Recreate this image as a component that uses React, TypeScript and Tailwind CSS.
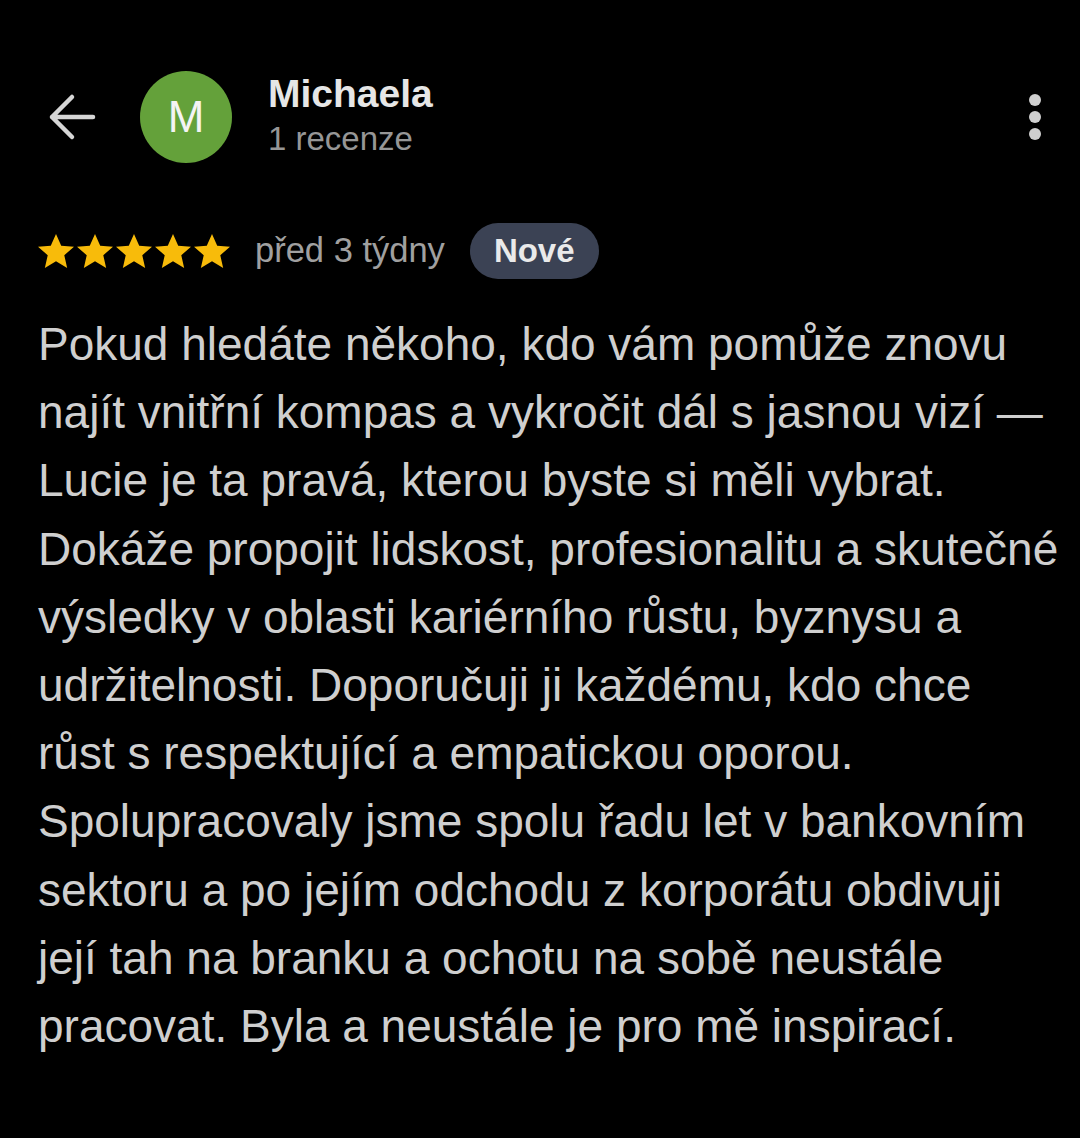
const lines = [
	'Pokud hledáte někoho, kdo vám pomůže znovu',
	'najít vnitřní kompas a vykročit dál s jasnou vizí —',
	'Lucie je ta pravá, kterou byste si měli vybrat.',
	'Dokáže propojit lidskost, profesionalitu a skutečné',
	'výsledky v oblasti kariérního růstu, byznysu a',
	'udržitelnosti. Doporučuji ji každému, kdo chce',
	'růst s respektující a empatickou oporou.',
	'Spolupracovaly jsme spolu řadu let v bankovním',
	'sektoru a po jejím odchodu z korporátu obdivuji',
	'její tah na branku a ochotu na sobě neustále',
	'pracovat. Byla a neustále je pro mě inspirací.',
];

function Star() {
	return (
		<svg width="36" height="36" viewBox="2 2 20 20">
			<path
				d="M12 2.5l2.9 6.6 7.1.6-5.4 4.7 1.6 7-6.2-3.7-6.2 3.7 1.6-7L2 9.7l7.1-.6z"
				fill="#f8bb0a"
			/>
		</svg>
	);
}

export default function App() {
	return (
		<div className="w-[1080px] h-[1138px] bg-black text-[#cfcfcf] font-['Liberation_Sans',Arial,sans-serif] overflow-hidden">
			{/* header */}
			<div className="flex items-center pt-[71px] pl-[48px] pr-[39px]">
				<svg width="48" height="48" viewBox="0 0 48 48" fill="none" stroke="#d6d6d6" strokeWidth="4.5" strokeLinecap="round" strokeLinejoin="round">
					<path d="M45 24H4M24 4 4 24l20 20" />
				</svg>
				<div className="ml-[44px] w-[92px] h-[92px] rounded-full bg-[#64a13a] flex items-center justify-center text-[44px] text-[#f4f4f4]">
					M
				</div>
				<div className="ml-[36px] flex flex-col -mt-[2px]">
					<span className="text-[39px] font-bold text-[#e6e6e6] leading-[44px]">Michaela</span>
					<span className="text-[33px] text-[#969696] leading-[42px] mt-[2px]">1 recenze</span>
				</div>
				<div className="ml-auto flex flex-col gap-[5px]">
					<span className="w-[12px] h-[12px] rounded-full bg-[#cfcfcf]" />
					<span className="w-[12px] h-[12px] rounded-full bg-[#cfcfcf]" />
					<span className="w-[12px] h-[12px] rounded-full bg-[#cfcfcf]" />
				</div>
			</div>

			{/* rating row */}
			<div className="flex items-center pl-[38px] mt-[60px]">
				<div className="flex gap-[3px]">
					<Star />
					<Star />
					<Star />
					<Star />
					<Star />
				</div>
				<span className="ml-[25px] text-[34.5px] text-[#a0a0a0]">před 3 týdny</span>
				<span className="ml-[25px] h-[56px] px-[24px] rounded-full bg-[#3b4254] flex items-center text-[33px] font-bold text-[#eaeaea]">
					Nové
				</span>
			</div>

			{/* review text */}
			<div className="pl-[38px] mt-[31px] text-[46px] leading-[68.2px]">
				{lines.map((l) => (
					<div key={l} className="whitespace-nowrap">
						{l}
					</div>
				))}
			</div>
		</div>
	);
}
